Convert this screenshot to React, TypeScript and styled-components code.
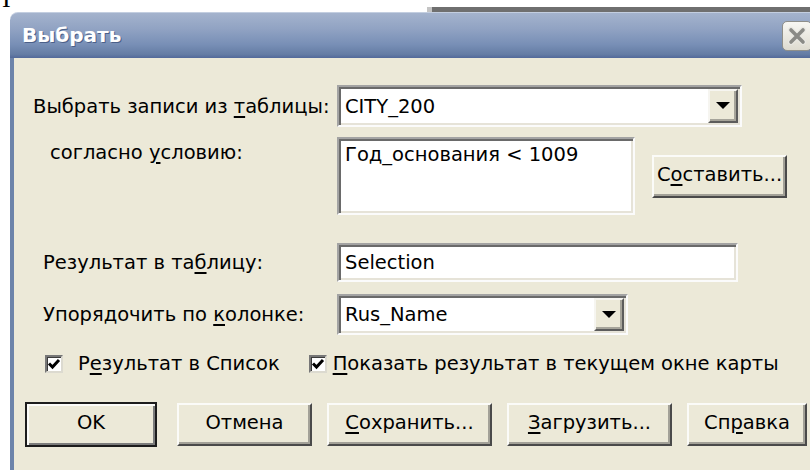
import styled, { createGlobalStyle } from "styled-components";

const GlobalStyle = createGlobalStyle`
  html, body {
    margin: 0;
    padding: 0;
    background: #fff;
  }
  body {
    width: 810px;
    height: 470px;
    overflow: hidden;
    font-family: "DejaVu Sans", "Liberation Sans", sans-serif;
    color: #000;
  }
`;

const Page = styled.div`
  width: 810px;
  height: 470px;
  overflow: hidden;
  display: flex;
  flex-direction: column;
`;

const TopStrip = styled.div`
  height: 12px;
  flex: none;
  display: flex;
  overflow: hidden;
`;

const Caret = styled.span`
  font-family: "Liberation Serif", serif;
  font-size: 26px;
  line-height: 26px;
  margin: -14px 0 0 2px;
`;

const BackWindow = styled.div`
  margin-left: auto;
  margin-top: 7px;
  width: 378px;
  height: 5px;
  background: #6f6f6f;
  border-left: 5px solid #c4c4c4;
`;

const Dialog = styled.div`
  margin-left: 10px;
  width: 830px;
  flex: 1;
  display: flex;
  flex-direction: column;
`;

const TitleBar = styled.div`
  height: 46px;
  flex: none;
  box-sizing: border-box;
  border-top-left-radius: 8px;
  border-top: 1px solid #c3cee0;
  background: linear-gradient(#a4b3cd 0%, #91a3c3 35%, #788fb6 70%, #647ca4 92%, #52699a 100%);
  display: flex;
  align-items: center;
  padding: 0 28px 0 12px;
`;

const Title = styled.span`
  font-weight: bold;
  font-size: 20px;
  color: #fff;
  text-shadow: 1px 1px 0 #4b6089;
  margin-top: -1px;
`;

const CloseBox = styled.div`
  margin-left: auto;
  width: 30px;
  height: 30px;
  box-sizing: border-box;
  border: 1px solid #8f8f8a;
  border-radius: 5px;
  background: linear-gradient(#f8f7f3, #dedbd0);
  display: flex;
  align-items: center;
  justify-content: center;
  margin-top: 1px;
`;

const Body = styled.div`
  flex: 1;
  background: #ece9d8;
  border-left: 4px solid #6d84aa;
  padding-top: 27px;
  display: flex;
  flex-direction: column;
`;

const FormRow = styled.div<{ $gap: number; $start?: boolean }>`
  display: grid;
  grid-template-columns: 323px auto;
  align-items: ${(p) => (p.$start ? "start" : "center")};
  margin-top: ${(p) => p.$gap}px;
`;

const Label = styled.div<{ $indent: number; $top?: number }>`
  padding-left: ${(p) => p.$indent}px;
  padding-top: ${(p) => p.$top ?? 0}px;
  font-size: 19.5px;
  white-space: nowrap;
`;

const U = styled.span`
  text-decoration: underline;
  text-underline-offset: 3px;
  text-decoration-thickness: 2px;
`;

const Field = styled.div<{ $w: number; $h: number; $top?: boolean }>`
  width: ${(p) => p.$w}px;
  height: ${(p) => p.$h}px;
  box-sizing: border-box;
  background: #fff;
  border: 2px solid;
  border-color: #a3a3a3 #fbfbfb #fbfbfb #a3a3a3;
  box-shadow: inset 2px 2px 0 #6a6a6a, inset -2px -2px 0 #e6e3d8;
  padding: 2px;
  display: flex;
  align-items: ${(p) => (p.$top ? "flex-start" : "stretch")};
`;

const FieldText = styled.div<{ $pt?: number }>`
  flex: 1;
  display: flex;
  align-items: ${(p) => (p.$pt !== undefined ? "flex-start" : "center")};
  padding: ${(p) => p.$pt ?? 0}px 0 0 4px;
  font-size: 19.5px;
  white-space: nowrap;
`;

const DropButton = styled.div`
  width: 30px;
  box-sizing: border-box;
  background: #ece9d8;
  border: 2px solid;
  border-color: #f6f5f0 #5c5c5c #5c5c5c #f6f5f0;
  box-shadow: inset -2px -2px 0 #a6a49a;
  display: flex;
  align-items: center;
  justify-content: center;
`;

const Arrow = styled.div`
  width: 0;
  height: 0;
  border-left: 7px solid transparent;
  border-right: 7px solid transparent;
  border-top: 7px solid #000;
  margin-bottom: 1px;
`;

const ConditionGroup = styled.div`
  display: flex;
  align-items: center;
  gap: 17px;
`;

const Button = styled.div<{ $w: number; $default?: boolean }>`
  width: ${(p) => p.$w}px;
  height: ${(p) => (p.$default ? 45 : 43)}px;
  box-sizing: border-box;
  background: #ece9d8;
  border: 2px solid;
  border-color: ${(p) =>
    p.$default ? "#1c1c1c" : "#fbfbf8 #4a4a4a #4a4a4a #fbfbf8"};
  box-shadow: ${(p) =>
    p.$default
      ? "inset 2px 2px 0 #fbfbf8, inset -2px -2px 0 #7c7c7c"
      : "inset -2px -2px 0 #a3a198"};
  display: flex;
  align-items: center;
  justify-content: center;
  padding-bottom: 4px;
  font-size: 19.5px;
  white-space: nowrap;
`;

const CheckRow = styled.div`
  display: flex;
  align-items: center;
  margin-top: 17px;
  padding-left: 31px;
  height: 23px;
`;

const CheckItem = styled.div<{ $gap: number; $after?: number }>`
  display: flex;
  align-items: center;
  gap: ${(p) => p.$gap}px;
  margin-right: ${(p) => p.$after ?? 0}px;
  font-size: 19.5px;
  white-space: nowrap;
`;

const Box = styled.div`
  width: 18px;
  height: 18px;
  flex: none;
  box-sizing: border-box;
  background: #fff;
  border: 2px solid;
  border-color: #777 #dcdad0 #dcdad0 #777;
  box-shadow: inset 1px 1px 0 #3c3c3c;
  display: flex;
  align-items: center;
  justify-content: center;
`;

const ButtonRow = styled.div`
  display: flex;
  align-items: center;
  gap: 15px;
  margin-top: 27px;
  padding-left: 11px;
`;

function Check() {
  return (
    <Box>
      <svg width="14" height="14" viewBox="0 0 14 14">
        <path d="M2 6.5 L5.5 10 L12 3" fill="none" stroke="#000" strokeWidth="3" />
      </svg>
    </Box>
  );
}

function Combo({ w, h, value }: { w: number; h: number; value: string }) {
  return (
    <Field $w={w} $h={h}>
      <FieldText>{value}</FieldText>
      <DropButton>
        <Arrow />
      </DropButton>
    </Field>
  );
}

export default function App() {
  return (
    <>
      <GlobalStyle />
      <Page>
        <TopStrip>
          <Caret>I</Caret>
          <BackWindow />
        </TopStrip>
        <Dialog>
          <TitleBar>
            <Title>Выбрать</Title>
            <CloseBox>
              <svg width="20" height="20" viewBox="0 0 20 20">
                <path d="M4 4 L16 16 M16 4 L4 16" stroke="#e9e8e3" strokeWidth="6" strokeLinecap="round" />
                <path d="M4 4 L16 16 M16 4 L4 16" stroke="#8a8a86" strokeWidth="3.6" strokeLinecap="round" />
              </svg>
            </CloseBox>
          </TitleBar>
          <Body>
            <FormRow $gap={0}>
              <Label $indent={19}>
                Выбрать записи из <U>т</U>аблицы:
              </Label>
              <Combo w={405} h={42} value="CITY_200" />
            </FormRow>

            <FormRow $gap={10} $start>
              <Label $indent={36} $top={4}>
                согласно <U>у</U>словию:
              </Label>
              <ConditionGroup>
                <Field $w={298} $h={78} $top>
                  <FieldText $pt={2}>Год_основания &lt; 1009</FieldText>
                </Field>
                <Button $w={135}>
                  С<U>о</U>ставить...
                </Button>
              </ConditionGroup>
            </FormRow>

            <FormRow $gap={28}>
              <Label $indent={29}>
                Результат в та<U>б</U>лицу:
              </Label>
              <Field $w={401} $h={39}>
                <FieldText>Selection</FieldText>
              </Field>
            </FormRow>

            <FormRow $gap={12}>
              <Label $indent={29}>
                Упорядочить по <U>к</U>олонке:
              </Label>
              <Combo w={291} h={41} value="Rus_Name" />
            </FormRow>

            <CheckRow>
              <CheckItem $gap={15} $after={29}>
                <Check />
                <span>
                  Р<U>е</U>зультат в Список
                </span>
              </CheckItem>
              <CheckItem $gap={6}>
                <Check />
                <span>
                  <U>П</U>оказать результат в текущем окне карты
                </span>
              </CheckItem>
            </CheckRow>

            <ButtonRow>
              <Button $w={132} $default style={{ marginRight: 5 }}>
                OK
              </Button>
              <Button $w={135}>Отмена</Button>
              <Button $w={165}>
                <U>С</U>охранить...
              </Button>
              <Button $w={165}>
                <U>З</U>агрузить...
              </Button>
              <Button $w={120}>
                Сп<U>р</U>авка
              </Button>
            </ButtonRow>
          </Body>
        </Dialog>
      </Page>
    </>
  );
}
